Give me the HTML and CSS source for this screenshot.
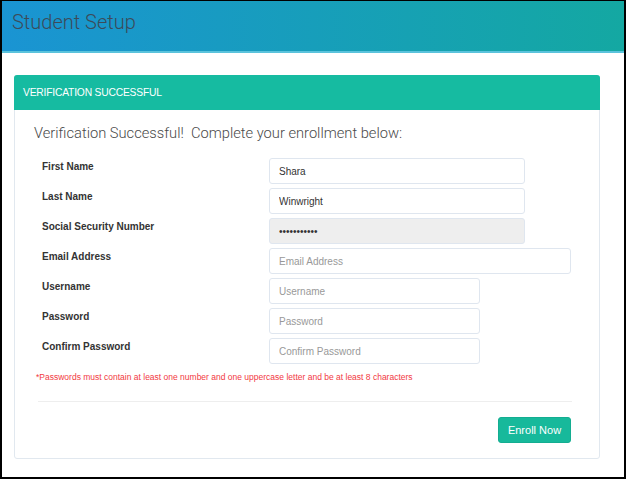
FILE: index.html
```html
<!DOCTYPE html>
<html lang="en">
<head>
    <meta charset="UTF-8">
    <title>Student Setup</title>
    <link rel="stylesheet" href="styles.css">
</head>
<body>
    <div class="frame">
        <header class="top-bar">
            <h1>Student Setup</h1>
        </header>

        <div class="panel">
            <div class="panel-heading">VERIFICATION SUCCESSFUL</div>
            <div class="panel-body">
                <p class="lead">Verification Successful!&nbsp; Complete your enrollment below:</p>

                <form class="enroll-form">
                    <label for="first-name">First Name</label>
                    <input id="first-name" class="field medium" type="text" value="Shara">

                    <label for="last-name">Last Name</label>
                    <input id="last-name" class="field medium" type="text" value="Winwright">

                    <label for="ssn">Social Security Number</label>
                    <input id="ssn" class="field medium" type="password" value="12345678901" disabled>

                    <label for="email">Email Address</label>
                    <input id="email" class="field wide" type="text" placeholder="Email Address">

                    <label for="username">Username</label>
                    <input id="username" class="field short" type="text" placeholder="Username">

                    <label for="password">Password</label>
                    <input id="password" class="field short" type="password" placeholder="Password">

                    <label for="confirm">Confirm Password</label>
                    <input id="confirm" class="field short" type="password" placeholder="Confirm Password">
                </form>

                <p class="note">*Passwords must contain at least one number and one uppercase letter and be at least 8 characters</p>

                <hr class="divider">

                <div class="actions">
                    <button class="enroll-btn" type="button">Enroll Now</button>
                </div>
            </div>
        </div>
    </div>
</body>
</html>
```

FILE: styles.css
```css
body {
    margin: 0;
    font-family: 'Liberation Sans', Arial, sans-serif;
    background-color: #fff;
}

.frame {
    box-sizing: border-box;
    height: 479px;
    border: 2px solid #000;
    border-top-width: 1px;
    background-color: #fff;
}

.top-bar {
    height: 50px;
    background: linear-gradient(to right, #1a94d3, #14a8a2);
    border-bottom: 2px solid #5bc3dc;
    display: flex;
    align-items: center;
}

.top-bar h1 {
    margin: 0 0 8px 10px;
    font-family: 'Roboto', sans-serif;
    font-weight: 300;
    font-size: 20px;
    color: #3c4b5a;
}

.panel {
    margin: 22px 24px 0 12px;
    border: 1px solid #e1e8ef;
    border-radius: 3px;
}

.panel-heading {
    height: 35px;
    margin: -1px -1px 0;
    padding-left: 9px;
    display: flex;
    align-items: center;
    background-color: #16bba1;
    border-radius: 3px 3px 0 0;
    color: #fff;
    font-size: 10.3px;
    letter-spacing: -0.2px;
}

.panel-body {
    padding: 13px 27px 15px 23px;
}

.lead {
    margin: 0 0 15px -4px;
    font-family: 'Roboto', sans-serif;
    font-weight: 300;
    font-size: 14.7px;
    line-height: 20px;
    color: #4a4a4a;
}

.enroll-form {
    display: grid;
    grid-template-columns: 231px 1fr;
    row-gap: 4px;
    align-items: start;
}

.enroll-form label {
    padding: 1px 0 0 4px;
    font-size: 10px;
    font-weight: bold;
    line-height: 16px;
    color: #333;
}

.field {
    box-sizing: border-box;
    height: 26px;
    padding: 0 9px;
    border: 1px solid #dfe6ef;
    border-radius: 3px;
    font-family: 'Liberation Sans', Arial, sans-serif;
    font-size: 10px;
    color: #333;
    background-color: #fff;
}

.field::placeholder {
    color: #999;
}

.field:disabled {
    background-color: #eee;
}

.field.medium {
    width: 256px;
}

.field.wide {
    width: 302px;
}

.field.short {
    width: 211px;
}

.note {
    margin: 7px 0 0 -2px;
    font-size: 8.5px;
    line-height: 12px;
    color: #f2393f;
}

.divider {
    margin: 18px 0 0;
    border: none;
    border-top: 1px solid #eeeeee;
}

.actions {
    display: flex;
    justify-content: flex-end;
    margin-top: 15px;
    padding-right: 1px;
}

.enroll-btn {
    width: 73px;
    height: 26px;
    border: 1px solid #14ad91;
    border-radius: 3px;
    background-color: #17b99b;
    color: #fff;
    font-family: 'Liberation Sans', Arial, sans-serif;
    font-size: 11px;
    cursor: pointer;
}
```
